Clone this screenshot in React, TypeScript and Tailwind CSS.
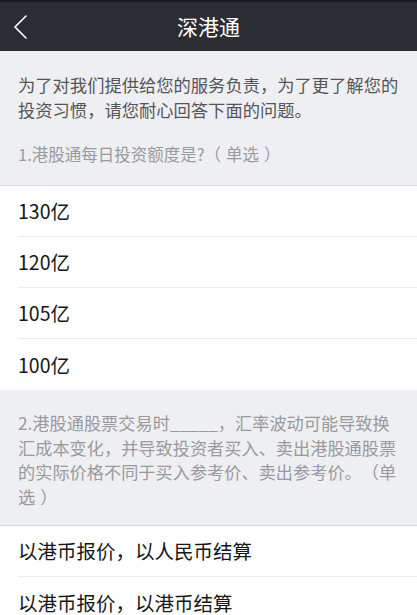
import type { ReactElement } from 'react';

const FONT = "font-['Noto_Sans_CJK_SC','Noto_Sans',sans-serif] [text-spacing-trim:space-all]";

const AMOUNTS = ['130亿', '120亿', '105亿', '100亿'];
const SETTLEMENTS = ['以港币报价，以人民币结算', '以港币报价，以港币结算'];

export default function App(): ReactElement {
  return (
    <div className={`flex h-[615px] w-[417px] flex-col overflow-hidden bg-[#eeeff3] ${FONT}`}>
      <Header />

      <section className="border-b border-[#d9dae0] px-[18px] pb-[18px] pt-[21px]">
        <p className="text-[17.3px] leading-[25px] text-[#555559]">
          为了对我们提供给您的服务负责，为了更了解您的投资习惯，请您耐心回答下面的问题。
        </p>
        <p className="mt-[20px] text-[16.5px] leading-[25px] text-[#9a9a9e]">
          1.港股通每日投资额度是?（<span className="px-[5px]">单选</span>）
        </p>
      </section>

      <OptionList options={AMOUNTS} />

      <section className="border-b border-[#d9dae0] px-[18px] pb-[16px] pt-[21px]">
        <p className="text-[17.2px] leading-[24.5px] text-[#9a9a9e]">
          2.港股通股票交易时_____，汇率波动可能导致换汇成本变化，并导致投资者买入、卖出港股通股票的实际价格不同于买入参考价、卖出参考价。（单选
          <span className="pl-[5px]">）</span>
        </p>
      </section>

      <OptionList options={SETTLEMENTS} />
    </div>
  );
}

function Header(): ReactElement {
  return (
    <header className="relative flex h-[51px] shrink-0 items-center justify-center border-t-2 border-[#1c1c20] bg-[#2c2c34]">
      <button type="button" aria-label="返回" className="absolute left-[12px] top-[12px] text-white">
        <svg width="18" height="26" viewBox="0 0 18 26" fill="none" aria-hidden="true">
          <path d="M14 2L3 13l11 11" stroke="currentColor" strokeWidth="1.6" strokeLinecap="round" />
        </svg>
      </button>
      <h1 className="text-[21px] font-normal leading-none text-white">深港通</h1>
    </header>
  );
}

function OptionList({ options }: { readonly options: readonly string[] }): ReactElement {
  return (
    <ul className="bg-white">
      {options.map((opt, i) => (
        <li key={opt} className="pl-[18px]">
          <div
            className={`flex h-[51px] items-center text-[19.5px] text-[#161616] ${
              i < options.length - 1 ? 'border-b border-[#ececef]' : ''
            }`}
          >
            {opt}
          </div>
        </li>
      ))}
    </ul>
  );
}
